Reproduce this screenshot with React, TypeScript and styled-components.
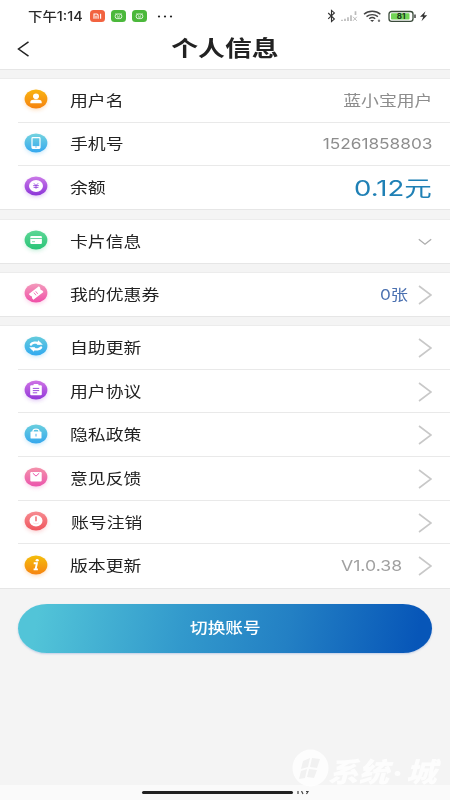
import React from 'react';
import styled, { createGlobalStyle } from 'styled-components';

const GlobalStyle = createGlobalStyle`
  * { box-sizing: border-box; }
  body { margin: 0; background: #f4f4f4; font-family: Inter, "Noto Sans CJK SC", sans-serif; }
  svg { display: block; }
`;

const Screen = styled.div`
  position: relative;
  width: 450px;
  height: 800px;
  display: flex;
  flex-direction: column;
  overflow: hidden;
  background: #f4f4f4;
`;

const Header = styled.header`
  height: 70px;
  flex: none;
  background: #fff;
  border-bottom: 1px solid #e6e6e6;
`;

const StatusBar = styled.div`
  height: 30px;
  padding: 2px 22px 0 28px;
  display: flex;
  align-items: center;
  justify-content: space-between;
`;

const StatusSide = styled.div<{ $gap: number }>`
  display: flex;
  align-items: center;
  gap: ${(p) => p.$gap}px;
`;

const DotsSlot = styled.div`
  margin-left: 4px;
`;

const Clock = styled.span`
  width: 55px;
  margin-right: 1px;
  font-size: 13px;
  line-height: 20px;
  font-weight: 500;
  color: #2a2a2a;
  white-space: nowrap;
  transform: scaleX(1.11);
  transform-origin: left;
`;

const TitleBar = styled.div`
  height: 38px;
  padding-left: 17px;
  display: grid;
  grid-template-columns: 40px 1fr 57px;
  align-items: center;
`;

const Title = styled.h1`
  margin: -2px 0 0;
  text-align: center;
  font-size: 21.5px;
  line-height: 36px;
  font-weight: 700;
  color: #222;
  transform: scaleX(1.25);
`;

const Group = styled.section<{ $gap: number }>`
  flex: none;
  margin-top: ${(p) => p.$gap}px;
  background: #fff;
  border-bottom: 1px solid #e6e6e6;
  box-shadow: 0 -1px 0 #ececec;
`;

const Row = styled.div<{ $height: number }>`
  height: ${(p) => p.$height}px;
  padding: 0 18px 0 24px;
  display: flex;
  align-items: center;
  background: linear-gradient(#e9e9e9, #e9e9e9) 18px 100% / 432px 1px no-repeat;
  &:last-child { background: none; }
`;

const IconSlot = styled.div`
  width: 24px;
  flex: none;
  margin-top: -3px;
  svg { overflow: visible; }
`;

const Label = styled.span<{ $shift?: number }>`
  flex: 1;
  margin-left: ${(p) => 22 + (p.$shift || 0)}px;
  font-size: 14.7px;
  line-height: 20px;
  color: #222;
  white-space: nowrap;
  transform: scaleX(1.215);
  transform-origin: left;
`;

const Value = styled.span<{ $size: number; $scale: number; $color: string; $gap?: number }>`
  margin-right: ${(p) => p.$gap || 0}px;
  font-size: ${(p) => p.$size}px;
  line-height: 24px;
  color: ${(p) => p.$color};
  white-space: nowrap;
  transform: scaleX(${(p) => p.$scale});
  transform-origin: right;
`;

const SwitchButton = styled.button`
  flex: none;
  width: 414px;
  height: 49px;
  margin: 15px 18px 0;
  padding: 0;
  border: 0;
  border-radius: 29px / 24.5px;
  background: linear-gradient(100deg, #52c4d8 5%, #3299cc 40%, #2380c4 65%, #0756b8 96%);
  box-shadow: 0 1px 2px rgba(40, 90, 190, 0.25);
  color: #fff;
  font: 500 14.7px/49px Inter, "Noto Sans CJK SC", sans-serif;
`;

const ButtonText = styled.span`
  display: inline-block;
  transform: scaleX(1.2);
`;

const NavigationBar = styled.footer`
  height: 15px;
  margin-top: auto;
  padding: 6px 0 0 142px;
  display: flex;
  align-items: flex-start;
  gap: 3px;
  background: #fafafa;
`;

const HomeHandle = styled.div`
  width: 151px;
  height: 3px;
  border-radius: 2px;
  background: #222;
`;

const Watermark = styled.div`
  position: absolute;
  left: 291px;
  top: 748px;
  display: flex;
  align-items: flex-start;
  color: #fff;
  opacity: 0.85;
`;

const WatermarkText = styled.span`
  margin-top: 7px;
  margin-left: -2px;
  display: flex;
  font: italic 900 27px/32px "Noto Sans CJK SC", sans-serif;
  white-space: nowrap;
  transform: scaleX(1.13);
  transform-origin: left;
`;

const WatermarkDot = styled.i`
  width: 5px;
  height: 5px;
  margin: 16px 5px 0 5px;
  border-radius: 50%;
  background: #fff;
`;

type IconName =
  | 'user' | 'phone' | 'money' | 'card' | 'ticket' | 'refresh'
  | 'clipboard' | 'lock' | 'mail' | 'power' | 'info';

const badgeColors: Record<IconName, [string, string]> = {
  user: ['#f9b412', '#f5820f'],
  phone: ['#73d3df', '#35a8ef'],
  money: ['#cb79e8', '#8c35d8'],
  card: ['#5ed796', '#29c477'],
  ticket: ['#f39abb', '#f04fa8'],
  refresh: ['#64cbdc', '#32aaf0'],
  clipboard: ['#cf72e5', '#9238d9'],
  lock: ['#69cede', '#36a8ed'],
  mail: ['#f491aa', '#eb55ac'],
  power: ['#f78b91', '#ef565d'],
  info: ['#f4be0c', '#f68411'],
};

const line = { fill: 'none', stroke: '#fff', strokeLinecap: 'round' as const, strokeLinejoin: 'round' as const };

function Glyph({ name, ink }: { name: IconName; ink: string }) {
  switch (name) {
    case 'user':
      return <g fill="#fff"><ellipse cx="12" cy="7.2" rx="3" ry="2.8" /><path d="M6.3 14.2V13c0-1.6 2.2-2.4 5.7-2.4s5.7.8 5.7 2.4v1.2z" /></g>;
    case 'phone':
      return <g><rect x="8" y="4.6" width="8" height="10.8" rx=".8" {...line} strokeWidth="1.2" /><path d="M8 13.1h8v2H8z" fill="#fff" /><path d="M11.3 14h1.4" stroke={ink} strokeWidth=".9" /></g>;
    case 'money':
      return <g><ellipse cx="12" cy="10" rx="7" ry="5.9" fill="#fff" /><path d="m9.9 7.3 2.1 2.2 2.1-2.2M9.2 9.6h5.6M9.6 11.4h4.8M12 9.5v3.2" fill="none" stroke={ink} strokeWidth=".8" /></g>;
    case 'card':
      return <g><rect x="6.3" y="6" width="11.6" height="8" rx="1.1" fill="#fff" /><path d="M6.3 8.5h11.6" stroke={ink} strokeWidth=".7" /><path d="M8 11.7h3" stroke={ink} strokeWidth=".6" /></g>;
    case 'ticket':
      return <g transform="rotate(-38 12 10)"><path d="M5.7 6.4h12.8v2.3a1.6 1.6 0 0 0 0 2.8v2.3H5.7v-2.3a1.6 1.6 0 0 0 0-2.8z" fill="#fff" /><path d="M10.6 8.4v3.4M12.8 8.4v3.4" stroke={ink} strokeWidth=".7" /></g>;
    case 'refresh':
      return <g><path d="M6.9 8.5C8.2 6.6 12 6 15.3 7.4M17.1 11.5c-1.3 1.9-5.1 2.5-8.4 1.1" {...line} strokeWidth="2.3" /><path d="m14.2 4.2 4.6 4.6h-6zM9.8 15.8l-4.6-4.6h6z" fill="#fff" /></g>;
    case 'clipboard':
      return <g><rect x="6.2" y="5.3" width="11.6" height="10" rx="1" fill="#fff" /><rect x="9.4" y="3.9" width="5.2" height="2.5" rx="1" fill="#fff" /><path d="M8.8 8.4h6.4M8.8 10.6h6.4M8.8 12.8h4.4" stroke={ink} strokeWidth=".9" /></g>;
    case 'lock':
      return <g><rect x="6.5" y="7.6" width="11" height="7" rx=".9" fill="#fff" /><path d="M9 8V6.9c0-2.5 6-2.5 6 0V8" {...line} strokeWidth="1.3" /><path d="M12 9.8v2.7" stroke={ink} strokeWidth=".9" /></g>;
    case 'mail':
      return <g><rect x="6.3" y="5.1" width="11.4" height="9.4" rx="1.1" fill="#fff" /><path d="m8.8 6.2 3.2 2.9 3.2-2.9" fill="none" stroke={ink} strokeWidth="1" /></g>;
    case 'power':
      return <g><ellipse cx="12" cy="9.8" rx="6.5" ry="5.7" fill="#fff" /><path d="M12 5.4v4.8" stroke={ink} strokeWidth="1.3" /><path d="M9.2 11.9c1.7 1.2 3.9 1.2 5.6 0" fill="none" stroke={ink} strokeWidth=".5" opacity=".4" /></g>;
    case 'info':
      return <g><ellipse cx="13.2" cy="5.2" rx="1.6" ry="1.2" fill="#fff" /><path d="M9.7 8.2h3.2l-1.3 6.2h2.3M9.6 14.4h2" fill="none" stroke="#fff" strokeWidth="1.9" /></g>;
  }
}

function Badge({ name }: { name: IconName }) {
  const [top, bottom] = badgeColors[name];
  return (
    <svg width="24" height="20" viewBox="0 0 24 20">
      <defs>
        <linearGradient id={`fill-${name}`} x2="0" y2="1"><stop stopColor={top} /><stop offset="1" stopColor={bottom} /></linearGradient>
        <filter id={`glow-${name}`} x="-40%" y="-40%" width="180%" height="190%"><feGaussianBlur stdDeviation="2.2" /></filter>
      </defs>
      <ellipse cx="12" cy="12" rx="11" ry="9" fill={bottom} opacity=".28" filter={`url(#glow-${name})`} />
      <ellipse cx="12" cy="10" rx="11.4" ry="9.4" fill={`url(#fill-${name})`} />
      <Glyph name={name} ink={bottom} />
    </svg>
  );
}

const ChevronRight = () => (
  <svg width="14" height="20" viewBox="0 0 14 20" fill="none" stroke="#c8c8c8" strokeWidth="1.6"><path d="m1 1 12 9-12 9" /></svg>
);

const ChevronDown = () => (
  <svg width="14" height="8" viewBox="0 0 14 8" fill="none" stroke="#adadad" strokeWidth="1.3"><path d="m.8 1.2 6.2 5 6.2-5" /></svg>
);

const AppChip = ({ color, kind }: { color: string; kind: 'mi' | 'face' }) => (
  <svg width="15" height="12" viewBox="0 0 15 12" fill="none" stroke="#fff">
    <rect width="15" height="12" rx="3.5" fill={color} stroke="none" />
    {kind === 'mi'
      ? <path d="M4 8.7V4h2.8q1.3 0 1.3 1.3v3.4M6 5.8v2.9M10.6 3.8v4.9" strokeWidth="1.1" />
      : <g strokeWidth=".8"><path d="M4.7 3.4 5.6 4.4M10.3 3.4l-.9 1" /><rect x="4.2" y="4" width="6.6" height="4.6" rx="2" /><path d="M6 5.8h.7M8.3 5.8H9M6.2 7h2.6" /></g>}
  </svg>
);

const Dots = () => (
  <svg width="16" height="3" viewBox="0 0 16 3" fill="#222"><circle cx="2" cy="1.5" r="1.1" /><circle cx="8" cy="1.5" r="1.1" /><circle cx="14" cy="1.5" r="1.1" /></svg>
);

const SystemIcons = () => (
  <svg width="103" height="14" viewBox="0 0 103 14" fill="none">
    <path d="m3.2 4 6.2 6-2.9 2.6V1.4l2.9 2.5-6.2 6" stroke="#333" strokeWidth="1.1" />
    <path d="M17 12v-1.2M20 12v-2.2M23 12V8.3M26 12V6.2M30.5 6V2.3" stroke="#bbb" strokeWidth="1.7" />
    <path d="m28 7.8 3.8 4M31.8 7.8l-3.8 4" stroke="#bbb" />
    <path d="M39 5.2c4.4-4 12-4 16.4 0M41.5 7.6c3.3-2.7 8.1-2.7 11.4 0M44.2 9.8c1.8-1.5 4.3-1.5 6 0" stroke="#444" strokeWidth="1.4" />
    <path d="m45.2 11 2 2 2-2z" fill="#444" /><circle cx="54" cy="11.7" r="1.2" fill="#777" />
    <rect x="64" y="2.5" width="24" height="9.8" rx="2.6" stroke="#3a4a3a" strokeWidth="1.3" />
    <rect x="66" y="4.3" width="18.5" height="6.2" rx=".8" fill="#72d557" />
    <path d="M90 5.5v3.6" stroke="#333" strokeWidth="1.4" />
    <text x="76" y="10.2" textAnchor="middle" fontFamily="Inter, sans-serif" fontSize="8" fontWeight="700" fill="#173519">81</text>
    <path d="m100.5 2.2-5.5 5.6h3.2l-1.7 4.5 5.7-6.1H99z" fill="#333" />
  </svg>
);

interface Item {
  icon: IconName;
  text: string;
  shift?: number;
  count?: string;
}

const links: Item[] = [
  { icon: 'refresh', text: '自助更新' },
  { icon: 'clipboard', text: '用户协议' },
  { icon: 'lock', text: '隐私政策' },
  { icon: 'mail', text: '意见反馈' },
  { icon: 'power', text: '账号注销', shift: 1 },
  { icon: 'info', text: '版本更新', count: 'V1.0.38' },
];

function MenuRow({ item, height, children }: { item: Item; height: number; children?: React.ReactNode }) {
  return (
    <Row $height={height}>
      <IconSlot><Badge name={item.icon} /></IconSlot>
      <Label $shift={item.shift}>{item.text}</Label>
      {children}
    </Row>
  );
}

export default function App() {
  return (
    <>
      <GlobalStyle />
      <Screen>
        <Header>
          <StatusBar>
            <StatusSide $gap={6}>
              <Clock>下午1:14</Clock>
              <AppChip color="#f26340" kind="mi" />
              <AppChip color="#4bb83b" kind="face" />
              <AppChip color="#4bb83b" kind="face" />
              <DotsSlot><Dots /></DotsSlot>
            </StatusSide>
            <SystemIcons />
          </StatusBar>
          <TitleBar>
            <svg width="13" height="16" viewBox="0 0 13 16" fill="none" stroke="#222" strokeWidth="1.5"><path d="M11.5.8 1.5 8l10 7.2" /></svg>
            <Title>个人信息</Title>
          </TitleBar>
        </Header>

        <Group $gap={9}>
          <MenuRow item={{ icon: 'user', text: '用户名' }} height={43.5}>
            <Value $size={14.7} $scale={1.215} $color="#8d8d8d">蓝小宝用户</Value>
          </MenuRow>
          <MenuRow item={{ icon: 'phone', text: '手机号' }} height={43.5}>
            <Value $size={15} $scale={1.15} $color="#8d8d8d">15261858803</Value>
          </MenuRow>
          <MenuRow item={{ icon: 'money', text: '余额' }} height={43}>
            <Value $size={21.5} $scale={1.28} $color="#1f80b5">0.12元</Value>
          </MenuRow>
        </Group>

        <Group $gap={10}>
          <MenuRow item={{ icon: 'card', text: '卡片信息' }} height={43}><ChevronDown /></MenuRow>
        </Group>

        <Group $gap={9}>
          <MenuRow item={{ icon: 'ticket', text: '我的优惠券' }} height={43}>
            <Value $size={14.7} $scale={1.17} $color="#4a70b0" $gap={10}>0张</Value>
            <ChevronRight />
          </MenuRow>
        </Group>

        <Group $gap={9}>
          {links.map((item) => (
            <MenuRow key={item.icon} item={item} height={43.7}>
              {item.count && <Value $size={14.5} $scale={1.22} $color="#a0a0a0" $gap={16}>{item.count}</Value>}
              <ChevronRight />
            </MenuRow>
          ))}
        </Group>

        <SwitchButton><ButtonText>切换账号</ButtonText></SwitchButton>

        <NavigationBar>
          <HomeHandle />
          <svg width="13" height="4" viewBox="0 0 13 4" fill="none" stroke="#444" strokeWidth="1.2"><path d="M2 0v3M5.5 0 7 3M10 .5h2L10.5 3" /></svg>
        </NavigationBar>

        <Watermark>
          <svg width="39" height="40" viewBox="0 0 39 40">
            <ellipse cx="19.5" cy="20" rx="18" ry="18.5" fill="#fff" />
            <path d="m12 13 7-3-2 9-7 2zM21 10l8 1-3 9-7-1zM10 23l6-2-2 9-6 1zM18 21l8 1-3 8-7-1z" fill="#f1f1f1" />
          </svg>
          <WatermarkText>系统<WatermarkDot />城</WatermarkText>
        </Watermark>
      </Screen>
    </>
  );
}
